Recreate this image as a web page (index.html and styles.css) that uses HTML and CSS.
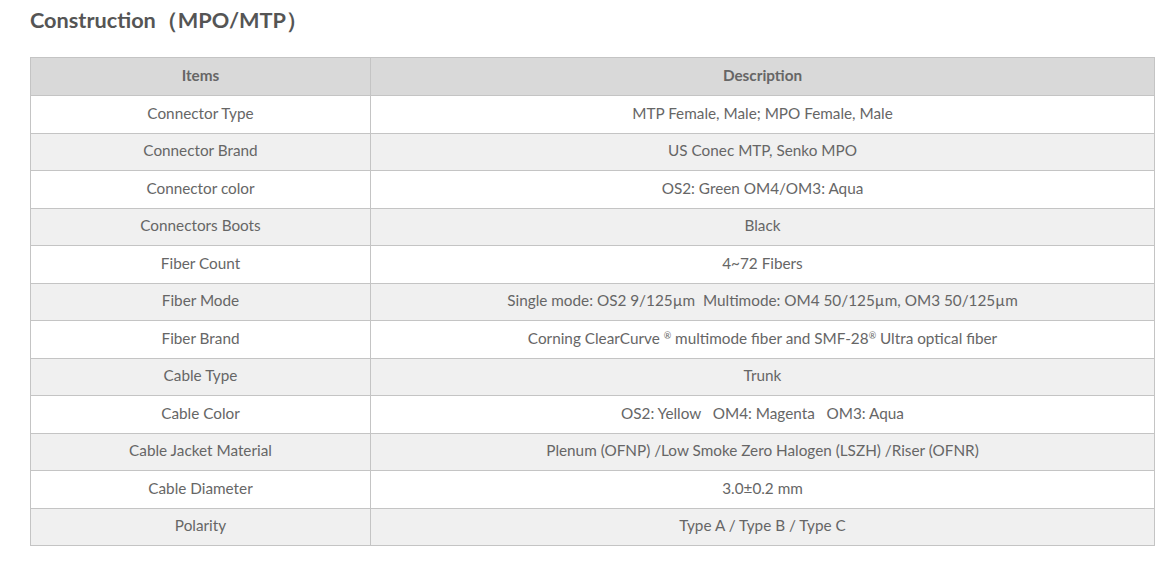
FILE: index.html
```html
<!DOCTYPE html>
<html lang="en">
<head>
<meta charset="utf-8">
<title>Construction (MPO/MTP)</title>
<link rel="stylesheet" href="styles.css">
</head>
<body>
<div class="page">
  <h2 class="title">Construction（MPO/MTP）</h2>
  <table class="spec">
    <thead>
      <tr><th class="c1">Items</th><th>Description</th></tr>
    </thead>
    <tbody>
      <tr><td class="c1">Connector Type</td><td>MTP Female, Male; MPO Female, Male</td></tr>
      <tr><td class="c1">Connector Brand</td><td>US Conec MTP, Senko MPO</td></tr>
      <tr><td class="c1">Connector color</td><td>OS2: Green OM4/OM3: Aqua</td></tr>
      <tr><td class="c1">Connectors Boots</td><td>Black</td></tr>
      <tr><td class="c1">Fiber Count</td><td>4~72 Fibers</td></tr>
      <tr><td class="c1">Fiber Mode</td><td>Single mode: OS2 9/125µm&nbsp; Multimode: OM4 50/125µm, OM3 50/125µm</td></tr>
      <tr><td class="c1">Fiber Brand</td><td>Corning ClearCurve <sup>®</sup> multimode fiber and SMF-28<sup>®</sup> Ultra optical fiber</td></tr>
      <tr><td class="c1">Cable Type</td><td>Trunk</td></tr>
      <tr><td class="c1">Cable Color</td><td>OS2: Yellow&nbsp;&nbsp; OM4: Magenta&nbsp;&nbsp; OM3: Aqua</td></tr>
      <tr><td class="c1">Cable Jacket Material</td><td>Plenum (OFNP) /Low Smoke Zero Halogen (LSZH) /Riser (OFNR)</td></tr>
      <tr><td class="c1">Cable Diameter</td><td>3.0±0.2 mm</td></tr>
      <tr><td class="c1">Polarity</td><td>Type A / Type B / Type C</td></tr>
    </tbody>
  </table>
</div>
</body>
</html>
```

FILE: styles.css
```css
html, body {
  margin: 0;
  padding: 0;
  background: #ffffff;
}
body {
  font-family: Lato, "Open Sans", "Liberation Sans", sans-serif;
  color: #666666;
}
.page {
  padding: 5px 20px 0 30px;
}
.title {
  margin: 0 0 22px 0;
  font-size: 21.7px;
  line-height: 30px;
  font-weight: 700;
  color: #555555;
}
.spec {
  width: 1125px;
  border-collapse: collapse;
  font-size: 15.3px;
}
.spec th, .spec td {
  border: 1px solid #c4c4c4;
  text-align: center;
  height: 33.5px;
  padding: 0 8px 3px;
}
.spec th {
  background: #d9d9d9;
  font-weight: 700;
  color: #666666;
  height: 34px;
}
.spec .c1 {
  width: 323px;
}
.spec tbody tr:nth-child(even) td {
  background: #f0f0f0;
}
.spec sup {
  font-size: 9px;
  vertical-align: 5px;
  line-height: 0;
}
```
